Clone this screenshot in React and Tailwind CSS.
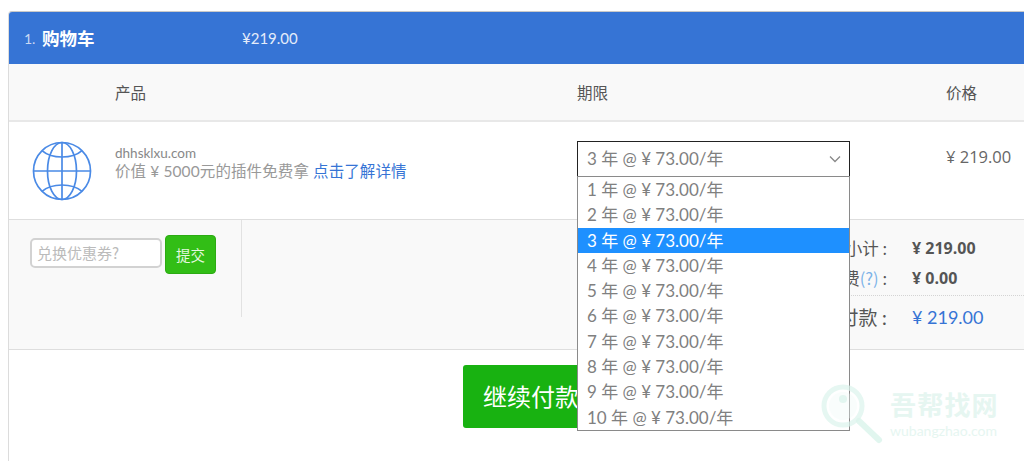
const geo = '[font-family:Lato,"Noto_Sans_CJK_SC",sans-serif]';

const options = [1, 2, 3, 4, 5, 6, 7, 8, 9, 10];

function Globe() {
  return (
    <svg width="60" height="60" viewBox="0 0 60 60" fill="none" stroke="#4a8ae6" strokeWidth="1.7" className="block">
      <circle cx="30" cy="30" r="28.5" />
      <path d="M1.5 30H58.5M30 1.5V58.5" />
      <ellipse cx="30" cy="30" rx="14.5" ry="28.5" />
      <path d="M10 9.6C15 14 22 16 30 16s15-2 20-6.4M10 50.4C15 46 22 44 30 44s15 2 20 6.4" />
    </svg>
  );
}

function Watermark() {
  return (
    <div className="absolute left-[821px] top-[384px] w-[180px] h-[60px] flex pointer-events-none z-20">
      <svg width="62" height="60" viewBox="0 0 62 60" fill="none" className="shrink-0">
        <circle cx="22" cy="22" r="19" stroke="#dcf4ec" strokeOpacity="0.7" strokeWidth="5" />
        <circle cx="22" cy="22" r="14" fill="#eefaf6" fillOpacity="0.35" />
        <circle cx="22" cy="15" r="4" fill="#dcf4ec" fillOpacity="0.8" />
        <path d="M38 37L58 56" stroke="#dcf4ec" strokeOpacity="0.85" strokeWidth="6" strokeLinecap="round" />
      </svg>
      <div className="ml-[7px] pt-[5px]">
        <div className={`text-[26px] leading-[30px] tracking-[1.2px] font-bold text-[#e6f6f1] whitespace-nowrap [font-family:"Noto_Sans_CJK_SC",sans-serif]`}>吾帮找网</div>
        <div className={`text-[14px] leading-[20px] mt-[2px] text-[#e6f6f1] whitespace-nowrap ${geo}`}>wubangzhao.com</div>
      </div>
    </div>
  );
}

function Dropdown() {
  return (
    <div className="absolute left-0 top-[35px] w-[273px] h-[255px] bg-white border border-[#8a8a8a] z-10 text-[#808080] text-[17px]">
      {options.map((n) => (
        <div
          key={n}
          className={`h-[25.3px] leading-[25px] pl-[9px] whitespace-nowrap ${n === 3 ? "bg-[#1e90ff] text-white" : ""}`}
        >
          {n} 年 @ ¥ 73.00/年
        </div>
      ))}
    </div>
  );
}

export default function App() {
  return (
    <div className={`relative w-[1024px] h-[461px] overflow-hidden bg-white pl-2 pt-[11px] ${geo}`}>
      <div className="w-[1100px] h-[450px] border-l border-t border-l-[#dcdcdc] border-t-[#c9c9c9] rounded-tl-[4px]">
        <div className="h-[52px] bg-[#3674d5] flex items-center text-white rounded-tl-[3px]">
          <span className="ml-[15px] w-[18px] text-[14px] text-[#c9d8f3]">1.</span>
          <span className="w-[200px] text-[17.5px] font-bold [font-family:'Noto_Sans_CJK_SC',sans-serif]">购物车</span>
          <span className="text-[15px] text-[#e4ecfa]">¥219.00</span>
        </div>

        <div className="h-[58px] bg-[#f9f9f9] border-b-2 border-[#e8e8e8] flex items-center pt-[1px] text-[15.5px] text-[#555] [font-family:'Noto_Sans_CJK_SC',sans-serif]">
          <span className="ml-[106px] w-[462px]">产品</span>
          <span className="w-[369px]">期限</span>
          <span>价格</span>
        </div>

        <div className="h-[98px] bg-white border-b border-[#dedede] flex pt-[19px]">
          <div className="ml-[23px] w-[83px] shrink-0"><Globe /></div>
          <div className="w-[462px] shrink-0 pt-[3px] text-[15.5px] leading-[19px]">
            <div className="text-[13.5px] leading-[18px] text-[#888]">dhhsklxu.com</div>
            <div className="text-[#999] whitespace-nowrap tracking-[0.1px]">
              价值 ¥ 5000元的插件免费拿 <span className="text-[#3674d5]">点击了解详情</span>
            </div>
          </div>
          <div className="relative w-[369px] shrink-0">
            <div className="w-[273px] h-[36px] border border-[#222] bg-white flex items-center justify-between pl-[9px] pr-[8px] text-[17px] text-[#808080]">
              <span>3 年 @ ¥ 73.00/年</span>
              <svg width="12" height="8" viewBox="0 0 12 8" fill="none" stroke="#888" strokeWidth="1.3"><path d="M1 1.5L6 6.5L11 1.5" /></svg>
            </div>
            <Dropdown />
          </div>
          <div className="pt-[5px] text-[16.5px] leading-[22px] text-[#666] [font-family:'Open_Sans',sans-serif]">¥ 219.00</div>
        </div>

        <div className="h-[130px] bg-[#f9f9f9] border-b border-[#dedede] flex">
          <div className="w-[233px] h-[97px] border-r border-[#e2e2e2] shrink-0 flex items-start pl-[21px] pt-[15px]">
            <div className="mt-[3px] w-[132px] h-[30px] bg-white border-2 border-[#d2d2d2] rounded-[5px] pl-[5px] text-[15px] leading-[26px] text-[#bbb] [font-family:'Noto_Sans_CJK_SC',sans-serif]">兑换优惠券?</div>
            <div className="ml-[3px] w-[51px] h-[39px] bg-[#32be16] border border-[#2cab13] rounded-[4px] flex items-center justify-center text-[14.5px] text-[#e6f8e0] [font-family:'Noto_Sans_CJK_SC',sans-serif] pt-[1px]">提交</div>
          </div>
          <div className="flex-1 pt-[13px] pl-[596px] text-[#555]">
            <div className="flex h-[30px] items-center text-[16px] font-bold [font-family:'Open_Sans',sans-serif]">
              <span className="w-[114px] pr-[25px] -ml-[40px] text-right font-normal text-[16.5px] whitespace-nowrap [font-family:'Noto_Sans_CJK_SC',sans-serif]">小计 :</span>
              <span>¥ 219.00</span>
            </div>
            <div className="flex h-[30px] items-center text-[16px] font-bold [font-family:'Open_Sans',sans-serif]">
              <span className="w-[114px] pr-[25px] -ml-[40px] text-right font-normal text-[16.5px] whitespace-nowrap [font-family:'Noto_Sans_CJK_SC',sans-serif]">税费<span className="text-[#7db3e8]">(?)</span> :</span>
              <span>¥ 0.00</span>
            </div>
            <div className="h-[3px] -ml-[40px] border-b border-dotted border-[#d4d4d4]"></div>
            <div className="flex h-[42px] items-center text-[18px] text-[#3674d5]">
              <span className="w-[114px] pr-[25px] -ml-[40px] text-right text-[19px] text-[#555] whitespace-nowrap [font-family:'Noto_Sans_CJK_SC',sans-serif]">总付款 :</span>
              <span>¥ 219.00</span>
            </div>
          </div>
        </div>

        <div className="pl-[454px] pt-[15px]">
          <div className="w-[150px] h-[63px] bg-[#18b211] rounded-[3px] flex items-center pl-[20px] pb-[2px] text-[24px] text-white [font-family:'Noto_Sans_CJK_SC',sans-serif]">继续付款</div>
        </div>
      </div>
      <Watermark />
    </div>
  );
}
